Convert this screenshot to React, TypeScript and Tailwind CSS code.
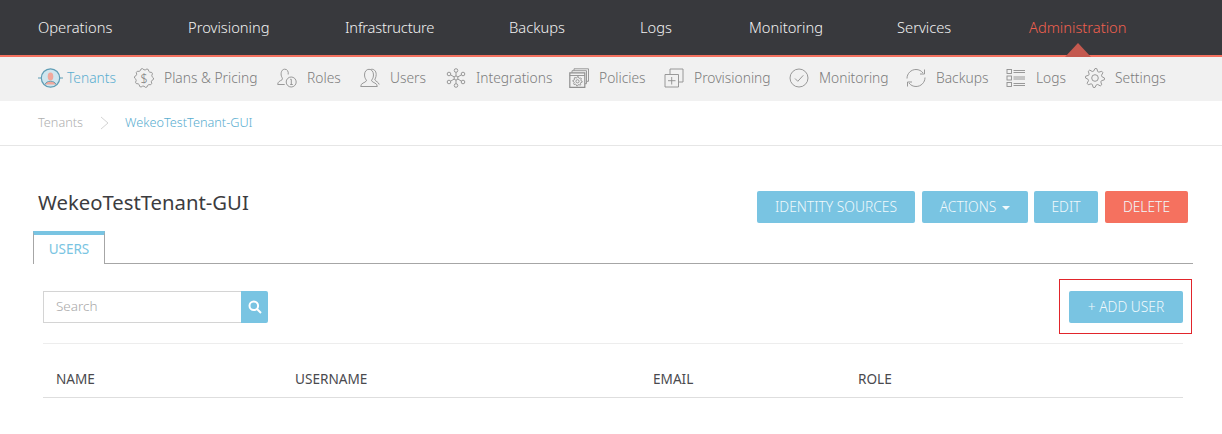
import React from "react";

const top = [
  { t: "Operations", w: "w-[75px]", x: "" },
  { t: "Provisioning", w: "w-[82px]", x: "" },
  { t: "Infrastructure", w: "w-[89px]", x: "tracking-[-0.2px]" },
  { t: "Backups", w: "w-[56px]", x: "" },
  { t: "Logs", w: "w-[34px]", x: "" },
  { t: "Monitoring", w: "w-[73px]", x: "" },
  { t: "Services", w: "w-[57px]", x: "" },
];

const S = ({ children }: { children: React.ReactNode }) => (
  <svg width={20} height={20} viewBox="0 0 20 20" fill="none" stroke="#8f8f8f" strokeWidth="0.9" className="shrink-0">{children}</svg>
);

const gearPath = (cx: number, cy: number, r1: number, r2: number, n: number) => {
  let d = "";
  for (let i = 0; i < n * 4; i++) {
    const a = (i / (n * 4)) * Math.PI * 2;
    const r = i % 4 < 2 ? r1 : r2;
    d += `${i ? "L" : "M"}${(cx + r * Math.cos(a)).toFixed(2)} ${(cy + r * Math.sin(a)).toFixed(2)}`;
  }
  return d + "Z";
};

const icons: Record<string, React.ReactNode> = {
  Tenants: (
    <svg width={25} height={24} viewBox="0 0 25 24" fill="none" className="shrink-0">
      <path d="M0 12h3.500M21.500 12h3.500" stroke="#5f9db5" strokeWidth="1.2" />
      <circle cx="12.500" cy="12" r="9.200" fill="#cfe6ef" stroke="#5f9db5" strokeWidth="1.2" />
      <ellipse cx="12.500" cy="10.500" rx="2.800" ry="4" fill="#f0a89c" />
      <path d="M7 18.500c.8-2.400 3-3.200 5.500-3.200s4.700.8 5.500 3.200" fill="#f0a89c" stroke="#5f9db5" strokeWidth="0.9" />
    </svg>
  ),
  "Plans & Pricing": (
    <S>
      <path d={gearPath(10, 10, 9.500, 8.200, 10)} strokeLinejoin="round" />
      <text x="10" y="14.600" textAnchor="middle" fontSize="12.500" fill="#777" stroke="none" fontFamily="Noto Sans, sans-serif">$</text>
    </S>
  ),
  Roles: (
    <S>
      <path d="M.700 16.500c0-2.800 2.300-3.500 4.300-4.700.7-.7.500-1.600-.1-2.500C3.500 7 3.700 1.500 7.500 1.200c2.800-.2 4.200 2.300 3.700 5.300" />
      <path d="M.700 16.500h7" />
      <circle cx="14.200" cy="14" r="5" />
      <path d="M13.200 11.300h1.100v5.200M13.200 16.500h2.600" />
    </S>
  ),
  Users: (
    <S>
      <path d="M.700 18.500c0-3.700 4.300-3.500 5.800-5.700 0-1.100-2-2.300-2-5.800 0-3.600 2-5.700 4.500-5.700s4.500 2.100 4.500 5.700c0 3.500-2 4.700-2 5.800 1.500 2.200 5.800 2 5.800 5.700z" />
      <path d="M10.500 1.500c3.300-1 5.700 1.400 5.700 5 0 3-1.400 4.400-1.400 5.500 1 1.300 3.700 2 4.400 4.500" />
    </S>
  ),
  Integrations: (
    <S>
      <circle cx="10" cy="10" r="2" />
      <circle cx="10" cy="2.500" r="1.800" /><circle cx="10" cy="17.500" r="1.800" />
      <circle cx="3" cy="6" r="1.800" /><circle cx="17" cy="6" r="1.800" />
      <circle cx="3" cy="14" r="1.800" /><circle cx="17" cy="14" r="1.800" />
      <path d="M10 4.300V8M10 12v3.700M4.600 6.900 8.300 9M15.400 6.900 11.700 9M4.600 13.100 8.300 11M15.400 13.100 11.700 11" />
    </S>
  ),
  Policies: (
    <S>
      <path d="M5 2.500V.800h14.500v12.500H18M3 4.500V2.700h14.500v13H16" />
      <path d="M.800 4.800h15v14.500h-15z" strokeWidth="1.200" />
      <path d="M.800 7.500h15" />
      <path d={gearPath(8.500, 13.300, 4.700, 3.500, 8)} />
      <circle cx="8.500" cy="13.300" r="1.600" />
    </S>
  ),
  Provisioning: (
    <S>
      <path d="M6 6V1h13v13h-4" />
      <path d="M1 6.500h13.500V19H1z" />
      <path d="M7.700 9v7.500M4 12.700h7.500" />
    </S>
  ),
  Monitoring: (
    <S>
      <circle cx="10" cy="10" r="9" />
      <path d="M6 10.500l2.800 2.800 5.500-6" />
    </S>
  ),
  Backups: (
    <S>
      <path d="M1 10.500C1 5.500 5 1.500 10 1.500c3 0 5.300 1.300 7 3.500" />
      <path d="M19 9.500c0 5-4 9-9 9-3 0-5.300-1.300-7-3.500" />
      <path d="M18.500 1.500V6h-4.500M1.500 18.500V14H6" />
    </S>
  ),
  Logs: (
    <S>
      <rect x="1" y="1.500" width="4.500" height="4" /><rect x="1" y="8" width="4.500" height="4" /><rect x="1" y="14.500" width="4.500" height="4" />
      <path d="M7.500 2.500H19M7.500 4.500H19M7.500 9H19M7.500 11H19M7.500 15.500H19M7.500 17.500H19" />
    </S>
  ),
  Settings: (
    <S>
      <path d={gearPath(10, 10, 9.500, 7, 8)} strokeLinejoin="round" />
      <circle cx="10" cy="10" r="3.300" />
    </S>
  ),
};

const subs = [
  { t: "Plans & Pricing", w: "w-[95px]" },
  { t: "Roles", w: "w-[35px]" },
  { t: "Users", w: "w-[38px]" },
  { t: "Integrations", w: "w-[75px]" },
  { t: "Policies", w: "w-[47px]" },
  { t: "Provisioning", w: "w-[77px]" },
  { t: "Monitoring", w: "w-[69px]" },
  { t: "Backups", w: "w-[52px]" },
  { t: "Logs", w: "w-[31px]" },
  { t: "Settings", w: "w-[52px]" },
];

const Btn = ({ children, cls = "" }: { children: React.ReactNode; cls?: string }) => (
  <button className={`h-8 rounded-[2px] text-[13.800px] text-[#f0f9fc] flex items-center justify-center whitespace-nowrap ${cls}`}>{children}</button>
);

export default function App() {
  return (
    <div className="w-[1222px] h-[434px] overflow-hidden bg-white font-['Noto_Sans',sans-serif] font-light">
      <header className="h-[57px] bg-[#38393d] border-b-2 border-[#f5715f] flex items-center pb-[1px] pl-[38px] gap-[75px] text-[14.700px] text-[#f2f2f2]">
        {top.map(i => <span key={i.t} className={`${i.w} ${i.x} whitespace-nowrap`}>{i.t}</span>)}
        <span className="relative whitespace-nowrap text-[#f0604f]">
          Administration
          <span className="absolute left-1/2 -translate-x-1/2 top-[27px] w-0 h-0 border-x-[13px] border-x-transparent border-b-[14px] border-b-[#c4594f]" />
        </span>
      </header>
      <nav className="h-11 bg-[#f1f1f1] flex items-center pb-[2px] pl-[38px] gap-[18px] text-[13.800px] text-[#7c7c7c]">
        <span className="flex items-center gap-[4px] text-[#5aaed0]">{icons.Tenants}<span className="w-[49px]">Tenants</span></span>
        {subs.map(s => <span key={s.t} className="flex items-center gap-[10px]">{icons[s.t]}<span className={`${s.w} whitespace-nowrap`}>{s.t}</span></span>)}
      </nav>
      <div className="h-[45px] border-b border-[#e6e6e6] flex items-center pl-[38px] text-[12.700px]">
        <span className="text-[#b0b0b0]">Tenants</span>
        <svg width="10" height="14" viewBox="0 0 10 14" fill="none" stroke="#d4d4d4" className="ml-[17px] mr-[15px]"><path d="M1 1l7 6-7 6" /></svg>
        <span className="text-[#5aaed0]">WekeoTestTenant-GUI</span>
      </div>
      <main className="pt-[45px] pl-[33px] pr-[29px]">
        <div className="flex items-center justify-between px-[5px] h-8">
          <h1 className="text-[20.300px] text-[#3c3c40] font-normal mb-[9px]">WekeoTestTenant-GUI</h1>
          <div className="flex">
            <Btn cls="bg-[#79c4e2] w-[158px]">IDENTITY SOURCES</Btn>
            <Btn cls="bg-[#79c4e2] w-[106px] ml-[7px]">ACTIONS<span className="ml-[6px] mt-[2px] w-0 h-0 border-x-4 border-x-transparent border-t-4 border-t-[#f0f9fc]" /></Btn>
            <Btn cls="bg-[#79c4e2] w-[64px] ml-[6px]">EDIT</Btn>
            <Btn cls="bg-[#f5715f] w-[83px] ml-[7px]">DELETE</Btn>
          </div>
        </div>
        <div className="mt-2 h-[33px] border-b border-[#a6a6a6]">
          <div className="w-[72px] h-[33px] border-x border-[#a6a6a6] border-t-4 border-t-[#79c4e2] bg-white flex items-center justify-center text-[13.500px] text-[#79c4e2] font-normal">USERS</div>
        </div>
        <section className="px-[10px] pt-[27px]">
          <div className="flex items-center justify-between pb-5 border-b border-[#ededed] box-content h-8">
            <div className="flex h-8">
              <div className="w-[198px] h-8 border border-r-0 border-[#d4d4d4] flex items-center pl-3 pb-[2px] text-[13.500px] text-[#a8a8a8]">Search</div>
              <div className="w-[27px] h-8 bg-[#79c4e2] rounded-r-[2px] flex items-center justify-center">
                <svg width="14" height="14" viewBox="0 0 14 14" fill="none" stroke="#fff" strokeWidth="2"><circle cx="5.800" cy="5.800" r="4.300" /><path d="M9 9l4 4" /></svg>
              </div>
            </div>
            <div className="relative">
              <Btn cls="bg-[#79c4e2] w-[114px]">+ ADD USER</Btn>
              <div className="absolute -left-[10px] -top-[12px] w-[133px] h-[55px] text-[#e1252b] border border-current" />
            </div>
          </div>
          <div className="h-[54px] border-b border-[#dedede] grid grid-cols-[239px_358px_205px_1fr] items-end pb-[8px] pl-[13px] text-[13.600px] text-[#4a4a4e] font-normal">
            <span>NAME</span><span>USERNAME</span><span>EMAIL</span><span>ROLE</span>
          </div>
        </section>
      </main>
    </div>
  );
}
